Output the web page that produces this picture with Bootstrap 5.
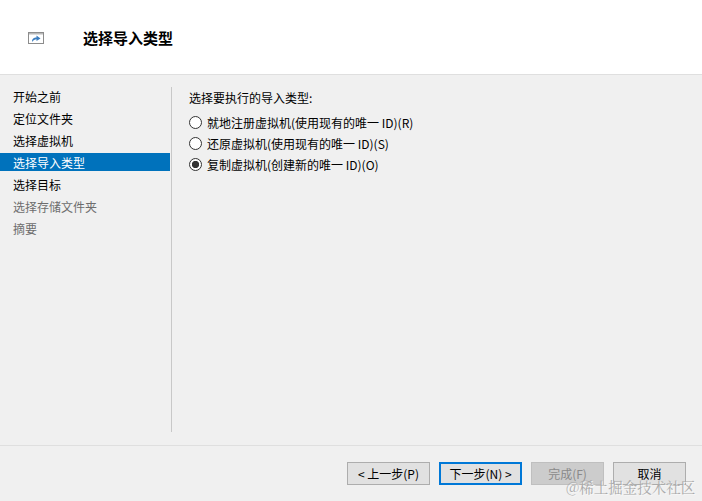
<!DOCTYPE html>
<html lang="zh-CN">
<head>
  <meta charset="UTF-8">
  <title>导入虚拟机</title>
  <link href="https://cdn.jsdelivr.net/npm/bootstrap@5.3.0/dist/css/bootstrap.min.css" rel="stylesheet">
  <style>
    html, body { height: 100%; }
    body {
      font-family: "Noto Sans CJK SC", "Liberation Sans", sans-serif;
      font-size: 12px;
      line-height: 18px;
      color: #000;
      background: #f0f0f0;
      overflow: hidden;
    }
    .wiz { width: 702px; height: 501px; position: relative; }
    .wiz-head { height: 75px; background: #fff; border-bottom: 1px solid #dfdfdf; padding-left: 28px; }
    .wiz-icon { width: 16px; height: 12px; display: block; margin-top: 1px; }
    .wiz-title { font-size: 15px; font-weight: 700; margin-left: 39px; margin-top: 1px; }
    .wiz-body { height: 370px; }
    .step-side { width: 172px; margin-top: 12px; margin-bottom: 13px; border-right: 1px solid #c8c8c8; padding-right: 1px; }
    .step-item { height: 18px; line-height: 20px; margin-bottom: 4px; padding-left: 13px; }
    .step-item.on { background: #0072bc; color: #fff; }
    .step-item.off { color: #6d6d6d; }
    .wiz-main { padding: 14px 0 0 17px; }
    .wiz-prompt { margin-bottom: 5px; }
    .opt-row { height: 21px; margin: 0; padding: 0; min-height: 0; }
    .opt-row .form-check-input {
      float: none; width: 13px; height: 13px; margin: 0 5px 0 0;
      border: 1px solid #333; background-color: #fff; flex: none;
    }
    .opt-row .form-check-input:checked {
      background-color: #fff; border-color: #333;
      background-image: radial-gradient(circle, #333 3.4px, transparent 3.9px);
    }
    .opt-row .form-check-label { opacity: 1; }
    .wiz-foot { height: 56px; border-top: 1px solid #dfdfdf; padding: 16px 16px 0 0; gap: 9px; }
    .wiz-btn {
      height: 23px; padding: 0; font-size: 12px; line-height: 19px; border-radius: 0;
      background: #e1e1e1; border: 1px solid #adadad; color: #000;
      font-family: inherit;
    }
    .btn-w83 { width: 83px; }
    .btn-w73 { width: 73px; }
    .wiz-btn.dflt { border: 2px solid #0078d7; }
    .wiz-btn:disabled { background: #cccccc; border-color: #bfbfbf; color: #8a8a8a; opacity: 1; }
    .wm {
      position: absolute; left: 566px; top: 478px; font-size: 14.5px; line-height: 18px;
      font-family: "Noto Serif CJK SC", "Noto Sans CJK SC", sans-serif;
      color: #aaaaaa; text-shadow: 1px 1px 0 #f8f8f8; white-space: nowrap;
    }
  </style>
</head>
<body>
  <div class="wiz">
    <div class="wiz-head d-flex align-items-center">
      <svg class="wiz-icon" viewBox="0 0 16 12">
        <rect x="0.5" y="0.5" width="15" height="11" fill="#fff" stroke="#8c8c8c"/>
        <rect x="1" y="1" width="14" height="1.5" fill="#b9b9b9"/>
        <path d="M4 10 C4 6.5 6 5.5 8.5 5.5 V3.5 L12.5 6.5 L8.5 9 V7.2 C6.8 7.2 5.5 8 4 10 Z" fill="#3b7dbf"/>
      </svg>
      <div class="wiz-title">选择导入类型</div>
    </div>
    <div class="wiz-body d-flex">
      <div class="step-side">
        <div class="step-item">开始之前</div>
        <div class="step-item">定位文件夹</div>
        <div class="step-item">选择虚拟机</div>
        <div class="step-item on">选择导入类型</div>
        <div class="step-item">选择目标</div>
        <div class="step-item off">选择存储文件夹</div>
        <div class="step-item off">摘要</div>
      </div>
      <div class="wiz-main flex-grow-1">
        <div class="wiz-prompt">选择要执行的导入类型:</div>
        <div class="form-check opt-row d-flex align-items-center">
          <input class="form-check-input" type="radio" name="importType" id="t1">
          <label class="form-check-label" for="t1">就地注册虚拟机(使用现有的唯一 ID)(R)</label>
        </div>
        <div class="form-check opt-row d-flex align-items-center">
          <input class="form-check-input" type="radio" name="importType" id="t2">
          <label class="form-check-label" for="t2">还原虚拟机(使用现有的唯一 ID)(S)</label>
        </div>
        <div class="form-check opt-row d-flex align-items-center">
          <input class="form-check-input" type="radio" name="importType" id="t3" checked>
          <label class="form-check-label" for="t3">复制虚拟机(创建新的唯一 ID)(O)</label>
        </div>
      </div>
    </div>
    <div class="wiz-foot d-flex justify-content-end align-items-start">
      <button type="button" class="btn wiz-btn btn-w83">&lt; 上一步(P)</button>
      <button type="button" class="btn wiz-btn btn-w83 dflt">下一步(N) &gt;</button>
      <button type="button" class="btn wiz-btn btn-w73" disabled>完成(F)</button>
      <button type="button" class="btn wiz-btn btn-w73">取消</button>
    </div>
    <div class="wm">@稀土掘金技术社区</div>
  </div>
  <script src="https://cdn.jsdelivr.net/npm/bootstrap@5.3.0/dist/js/bootstrap.bundle.min.js"></script>
</body>
</html>
